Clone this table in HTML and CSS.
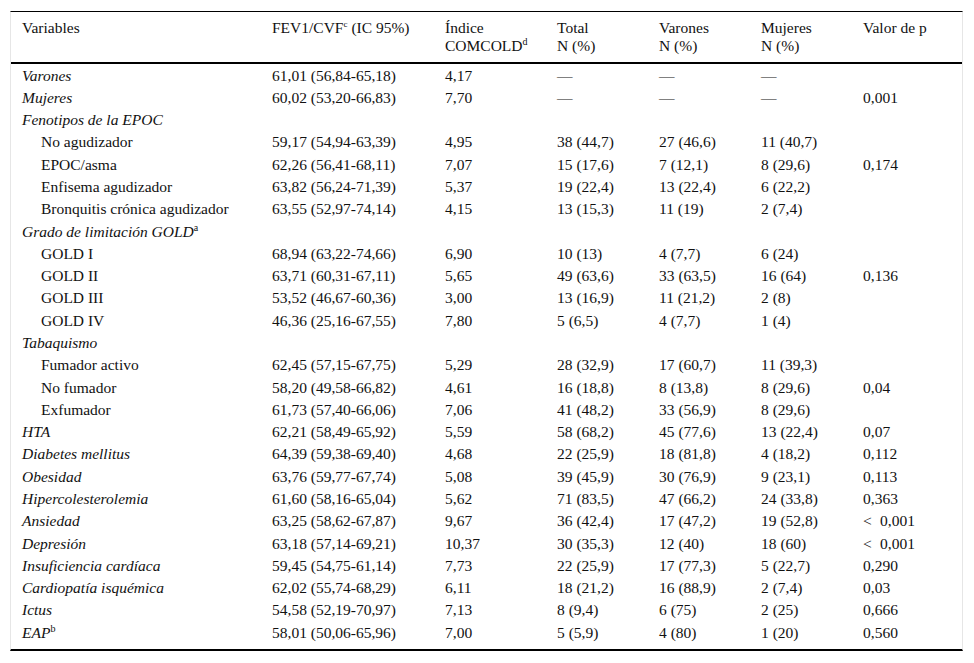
FILE: index.html
```html
<!DOCTYPE html>
<html lang="es">
<head>
<meta charset="utf-8">
<title>Tabla</title>
<link rel="stylesheet" href="styles.css">
</head>
<body>
<div class="frame">
<table class="data">
<colgroup>
<col class="c1"><col class="c2"><col class="c3"><col class="c4"><col class="c5"><col class="c6"><col class="c7">
</colgroup>
<thead>
<tr>
<th>Variables</th>
<th>FEV1/CVF<sup class="sm">c</sup> (IC 95%)</th>
<th>Índice<br>COMCOLD<sup>d</sup></th>
<th>Total<br>N (%)</th>
<th>Varones<br>N (%)</th>
<th>Mujeres<br>N (%)</th>
<th>Valor de p</th>
</tr>
</thead>
<tbody>
<tr><td class="it">Varones</td><td>61,01 (56,84-65,18)</td><td>4,17</td><td>—</td><td>—</td><td>—</td><td></td></tr>
<tr><td class="it">Mujeres</td><td>60,02 (53,20-66,83)</td><td>7,70</td><td>—</td><td>—</td><td>—</td><td>0,001</td></tr>
<tr><td class="it">Fenotipos de la EPOC</td><td></td><td></td><td></td><td></td><td></td><td></td></tr>
<tr><td class="ind">No agudizador</td><td>59,17 (54,94-63,39)</td><td>4,95</td><td>38 (44,7)</td><td>27 (46,6)</td><td>11 (40,7)</td><td></td></tr>
<tr><td class="ind">EPOC/asma</td><td>62,26 (56,41-68,11)</td><td>7,07</td><td>15 (17,6)</td><td>7 (12,1)</td><td>8 (29,6)</td><td>0,174</td></tr>
<tr><td class="ind">Enfisema agudizador</td><td>63,82 (56,24-71,39)</td><td>5,37</td><td>19 (22,4)</td><td>13 (22,4)</td><td>6 (22,2)</td><td></td></tr>
<tr><td class="ind">Bronquitis crónica agudizador</td><td>63,55 (52,97-74,14)</td><td>4,15</td><td>13 (15,3)</td><td>11 (19)</td><td>2 (7,4)</td><td></td></tr>
<tr><td class="it">Grado de limitación GOLD<sup>a</sup></td><td></td><td></td><td></td><td></td><td></td><td></td></tr>
<tr><td class="ind">GOLD I</td><td>68,94 (63,22-74,66)</td><td>6,90</td><td>10 (13)</td><td>4 (7,7)</td><td>6 (24)</td><td></td></tr>
<tr><td class="ind">GOLD II</td><td>63,71 (60,31-67,11)</td><td>5,65</td><td>49 (63,6)</td><td>33 (63,5)</td><td>16 (64)</td><td>0,136</td></tr>
<tr><td class="ind">GOLD III</td><td>53,52 (46,67-60,36)</td><td>3,00</td><td>13 (16,9)</td><td>11 (21,2)</td><td>2 (8)</td><td></td></tr>
<tr><td class="ind">GOLD IV</td><td>46,36 (25,16-67,55)</td><td>7,80</td><td>5 (6,5)</td><td>4 (7,7)</td><td>1 (4)</td><td></td></tr>
<tr><td class="it">Tabaquismo</td><td></td><td></td><td></td><td></td><td></td><td></td></tr>
<tr><td class="ind">Fumador activo</td><td>62,45 (57,15-67,75)</td><td>5,29</td><td>28 (32,9)</td><td>17 (60,7)</td><td>11 (39,3)</td><td></td></tr>
<tr><td class="ind">No fumador</td><td>58,20 (49,58-66,82)</td><td>4,61</td><td>16 (18,8)</td><td>8 (13,8)</td><td>8 (29,6)</td><td>0,04</td></tr>
<tr><td class="ind">Exfumador</td><td>61,73 (57,40-66,06)</td><td>7,06</td><td>41 (48,2)</td><td>33 (56,9)</td><td>8 (29,6)</td><td></td></tr>
<tr><td class="it">HTA</td><td>62,21 (58,49-65,92)</td><td>5,59</td><td>58 (68,2)</td><td>45 (77,6)</td><td>13 (22,4)</td><td>0,07</td></tr>
<tr><td class="it">Diabetes mellitus</td><td>64,39 (59,38-69,40)</td><td>4,68</td><td>22 (25,9)</td><td>18 (81,8)</td><td>4 (18,2)</td><td>0,112</td></tr>
<tr><td class="it">Obesidad</td><td>63,76 (59,77-67,74)</td><td>5,08</td><td>39 (45,9)</td><td>30 (76,9)</td><td>9 (23,1)</td><td>0,113</td></tr>
<tr><td class="it">Hipercolesterolemia</td><td>61,60 (58,16-65,04)</td><td>5,62</td><td>71 (83,5)</td><td>47 (66,2)</td><td>24 (33,8)</td><td>0,363</td></tr>
<tr><td class="it">Ansiedad</td><td>63,25 (58,62-67,87)</td><td>9,67</td><td>36 (42,4)</td><td>17 (47,2)</td><td>19 (52,8)</td><td><span class="lt">&lt;</span>0,001</td></tr>
<tr><td class="it">Depresión</td><td>63,18 (57,14-69,21)</td><td>10,37</td><td>30 (35,3)</td><td>12 (40)</td><td>18 (60)</td><td><span class="lt">&lt;</span>0,001</td></tr>
<tr><td class="it">Insuficiencia cardíaca</td><td>59,45 (54,75-61,14)</td><td>7,73</td><td>22 (25,9)</td><td>17 (77,3)</td><td>5 (22,7)</td><td>0,290</td></tr>
<tr><td class="it">Cardiopatía isquémica</td><td>62,02 (55,74-68,29)</td><td>6,11</td><td>18 (21,2)</td><td>16 (88,9)</td><td>2 (7,4)</td><td>0,03</td></tr>
<tr><td class="it">Ictus</td><td>54,58 (52,19-70,97)</td><td>7,13</td><td>8 (9,4)</td><td>6 (75)</td><td>2 (25)</td><td>0,666</td></tr>
<tr><td class="it">EAP<sup>b</sup></td><td>58,01 (50,06-65,96)</td><td>7,00</td><td>5 (5,9)</td><td>4 (80)</td><td>1 (20)</td><td>0,560</td></tr>
</tbody>
</table>
</div>
</body>
</html>
```
FILE: styles.css
```css
html, body {
  margin: 0;
  padding: 0;
  background: #fff;
}

body {
  font-family: "Liberation Serif", "Times New Roman", serif;
  font-size: 15.5px;
  color: #111;
}

.frame {
  margin: 11px 0 0 10px;
  width: 953px;
  box-sizing: border-box;
  border-top: 1px solid #000;
  border-bottom: 2px solid #000;
  border-left: 1px solid #e6e6e6;
  border-right: 1px solid #e6e6e6;
  padding-bottom: 6px;
}

.data {
  width: 951px;
  border-collapse: collapse;
  table-layout: fixed;
}

.c1 { width: 250px; }
.c2 { width: 173px; }
.c3 { width: 112px; }
.c4 { width: 102px; }
.c5 { width: 102px; }
.c6 { width: 102px; }
.c7 { width: 110px; }

.data th {
  font-weight: normal;
  text-align: left;
  vertical-align: top;
  padding: 7px 8px 7px 11px;
  line-height: 18px;
  border-bottom: 2px solid #000;
}

.data td {
  padding: 2.6px 8px 1.4px 11px;
  line-height: 18.3px;
  text-align: left;
  vertical-align: middle;
  white-space: nowrap;
}

.data td.it {
  font-style: italic;
}

.data td.ind {
  padding-left: 30px;
}

sup {
  font-size: 10px;
  font-style: normal;
  line-height: 0;
  vertical-align: 6px;
}

sup.sm {
  font-size: 9px;
}

.lt {
  display: inline-block;
  width: 17px;
}
```
